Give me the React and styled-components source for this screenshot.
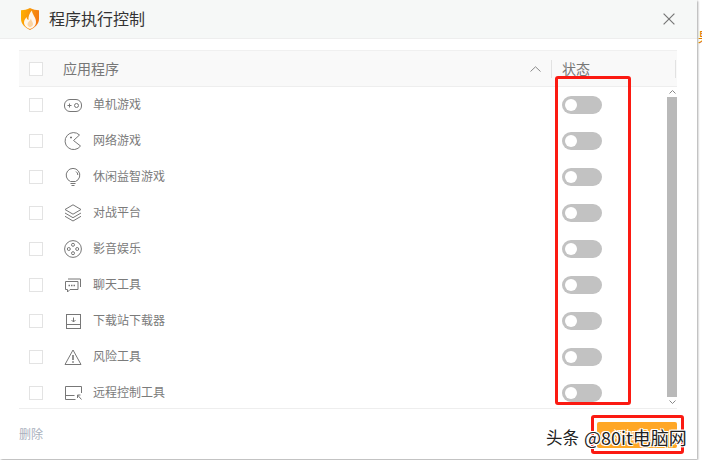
import React from "react";
import styled, {createGlobalStyle} from "styled-components";

const Global = createGlobalStyle`
  html, body {
    margin: 0;
    padding: 0;
    background: #fff;
  }
  * {
    box-sizing: border-box;
  }
`

const Page = styled.div`
  position: relative;
  width: 702px;
  height: 460px;
  overflow: hidden;
  background: #fff;
  font-family: "Noto Sans CJK SC", "Liberation Sans", sans-serif;
`

const Dialog = styled.div`
  display: flex;
  flex-direction: column;
  width: 697px;
  height: 459px;
  background: #fff;
  box-shadow: 1px 1px 2px rgba(0, 0, 0, 0.35);
`

const Header = styled.div`
  display: flex;
  align-items: center;
  flex: none;
  height: 39px;
  padding: 0 22px 0 21px;
  background: #f6f8f7;
  border-bottom: 1px solid #eeeeee;
`

const Title = styled.div`
  flex: 1;
  margin: 0 0 2px 10px;
  font-size: 16px;
  line-height: 22px;
  color: #333;
`

const Content = styled.div`
  display: flex;
  flex-direction: column;
  flex: 1;
  padding: 11px 20px 0 19px;
`

const TableHead = styled.div`
  display: flex;
  align-items: center;
  flex: none;
  height: 37px;
  padding-left: 10px;
  background: #f9f9f9;
  border-top: 1px solid #f0f0f0;
  border-bottom: 1px solid #eeeeee;
`

const Check = styled.div`
  flex: none;
  width: 14px;
  height: 14px;
  background: #fff;
  border: 1px solid #e3e3e3;
`

const HeadName = styled.div`
  width: 467px;
  margin: 0 0 2px 20px;
  font-size: 14px;
  color: #777;
`

const Divider = styled.div`
  flex: none;
  width: 1px;
  height: 18px;
  margin-left: ${p => p.$gap || 0}px;
  background: #e2e2e2;
`

const HeadState = styled.div`
  width: 113px;
  margin: 0 0 2px 10px;
  font-size: 14px;
  line-height: 18px;
  color: #777;
`

const Body = styled.div`
  display: flex;
  flex: none;
  height: 322px;
  border-bottom: 1px solid #eeeeee;
`

const List = styled.div`
  flex: 1;
`

const Row = styled.div`
  display: flex;
  align-items: center;
  height: 36px;
  padding-left: 10px;
`

const IconBox = styled.div`
  display: flex;
  align-items: center;
  justify-content: center;
  flex: none;
  width: 20px;
  height: 20px;
  margin-left: 20px;
`

const Name = styled.div`
  width: 469px;
  margin: 0 0 3px 10px;
  font-size: 12px;
  color: #7b7b7b;
`

const Toggle = styled.div`
  display: flex;
  align-items: center;
  width: 40px;
  height: 18px;
  padding-left: 3px;
  border-radius: 9px;
  background: #c2c2c2;
`

const Knob = styled.div`
  width: 12px;
  height: 12px;
  border-radius: 50%;
  background: #fff;
`

const Scrollbar = styled.div`
  display: flex;
  flex-direction: column;
  align-items: center;
  flex: none;
  width: 10px;
  height: 321px;
`

const ScrollArrow = styled.div`
  display: flex;
  align-items: center;
  justify-content: center;
  flex: none;
  height: 10px;
`

const ScrollThumb = styled.div`
  flex: none;
  width: 10px;
  height: 300px;
  background: #b9b9b9;
`

const Footer = styled.div`
  display: flex;
  align-items: center;
  justify-content: space-between;
  flex: none;
  height: 50px;
  padding-top: 1px;
`

const Delete = styled.div`
  margin-bottom: 2px;
  font-size: 12px;
  color: #a9b0bd;
`

const Primary = styled.div`
  display: flex;
  align-items: center;
  justify-content: center;
  width: 80px;
  height: 26px;
  border-radius: 2px;
  background: #ffa726;
  color: #fff;
  font-size: 12px;
`

const CloseBtn = styled.svg`
  flex: none;
  display: block;
  margin-bottom: 1px;
`

const Mark = styled.div`
  position: absolute;
  left: ${p => p.$x}px;
  top: ${p => p.$y}px;
  width: ${p => p.$w}px;
  height: ${p => p.$h}px;
  border: 3px solid #fb1a12;
  border-radius: 3px;
  pointer-events: none;
`

const Watermark = styled.div`
  position: absolute;
  left: 546px;
  top: 424px;
  display: flex;
  align-items: center;
  gap: 5px;
  height: 26px;
  white-space: nowrap;
  color: #222;
  text-shadow: 1px 1px 0 #fff, -1px -1px 0 #fff, 1px -1px 0 #fff, -1px 1px 0 #fff;
`

const MarkSource = styled.span`
  font-size: 16.5px;
`

const MarkName = styled.span`
  font-size: 18px;
`

const BehindText = styled.div`
  position: absolute;
  left: 698px;
  top: 28px;
  font-size: 14px;
  line-height: 16px;
  color: #e07b00;
`

const s = {fill: "none", stroke: "#777", strokeWidth: 1}

const icons = {
    game: (
        <svg width="18" height="13" viewBox="0 0 18 13" {...s}>
            <rect x=".5" y=".5" width="17" height="12" rx="5.5"/>
            <path d="M3.5 6.5h4M5.5 4.500v4"/>
            <circle cx="12.5" cy="6.5" r="2"/>
        </svg>
    ),
    pac: (
        <svg width="18" height="18" viewBox="0 0 18 18" {...s}>
            <path d="M15.500 3 9.500 8.500 16.500 14A8.500 8.500 0 1 1 15.500 3Z"/>
            <path d="M6 5.500h2M7 4.500v2"/>
        </svg>
    ),
    bulb: (
        <svg width="16" height="18" viewBox="0 0 16 18" {...s}>
            <path d="M5.5 13.5a6.8 6.8 0 1 1 5 0z"/>
            <path d="M11 3.5a4 4 0 0 1 1.8 3.5"/>
            <path d="M5.5 15.5h5M6.5 17.5h3"/>
        </svg>
    ),
    layers: (
        <svg width="18" height="18" viewBox="0 0 18 18" {...s}>
            <path d="M9 .8 17 5.5 9 10.2 1 5.5z"/>
            <path d="M1 9 9 13.7 17 9"/>
            <path d="M1 12.3 9 17 17 12.3"/>
        </svg>
    ),
    media: (
        <svg width="18" height="18" viewBox="0 0 18 18" {...s}>
            <circle cx="9" cy="9" r="8.4"/>
            <circle cx="9" cy="4.8" r="1.5"/>
            <circle cx="4.8" cy="9" r="1.5"/>
            <circle cx="13.2" cy="9" r="1.5"/>
            <circle cx="9" cy="13.2" r="1.5"/>
        </svg>
    ),
    chat: (
        <svg width="16" height="15" viewBox="0 0 16 15" {...s}>
            <path d="M.5 3.5h12.5v8H5L2.5 14v-2.5h-2z"/>
            <path d="M3 1h12.5v8"/>
            <path d="M3.500 7.500h1.500M6 7.500h1.500M8.500 7.500h1.500" strokeWidth="1.500"/>
        </svg>
    ),
    download: (
        <svg width="15" height="15" viewBox="0 0 15 15" {...s}>
            <rect x=".5" y=".5" width="14" height="14"/>
            <path d="M.5 10.500h14"/>
            <path d="M7.500 3.500v4.500M5.500 6l2 2 2-2"/>
        </svg>
    ),
    warn: (
        <svg width="18" height="16" viewBox="0 0 18 16" {...s}>
            <path d="M9 1 17 15.500H1z"/>
            <path d="M9 6v5M9 12.200v1.600" strokeWidth="1.600"/>
        </svg>
    ),
    remote: (
        <svg width="17" height="14" viewBox="0 0 17 14" {...s}>
            <path d="M16.500 7V.5H.5v13h10"/>
            <path d="M.5 9.500h9"/>
            <path d="M12.500 9h3M12.500 9v3M12.500 9l4 4.500"/>
        </svg>
    ),
}

const rows = [
    ["game", "单机游戏"],
    ["pac", "网络游戏"],
    ["bulb", "休闲益智游戏"],
    ["layers", "对战平台"],
    ["media", "影音娱乐"],
    ["chat", "聊天工具"],
    ["download", "下载站下载器"],
    ["warn", "风险工具"],
    ["remote", "远程控制工具"],
]

const Shield = () => (
    <svg width="18" height="22" viewBox="0 0 18 22">
        <defs>
            <linearGradient id="shieldFill" x1="0" y1="0" x2="1" y2="0.300">
                <stop offset="0" stopColor="#ffb400"/>
                <stop offset="1" stopColor="#f47a12"/>
            </linearGradient>
        </defs>
        <path d="M9 0C12 1.500 15 2.200 18 2.200V11C18 16 14 19.500 9 22C4 19.500 0 16 0 11V2.200C3 2.200 6 1.500 9 0Z"
              fill="url(#shieldFill)"/>
        <path d="M11 2.500C11 6.500 15 9 15 14C15 17.500 12.500 20 9 21C5.500 20 3 17.500 3 14.500C3 12 4.500 10.500 5.500 9C5.700 10.500 6.300 11.500 7.500 12C7 9 8.500 5 11 2.500Z"
              fill="#fff" fillOpacity="0.92"/>
        <path d="M10 10.500C10.300 13 12 14 12 16C12 17.700 10.700 18.800 9 19.300C7.500 18.700 6.500 17.500 6.500 16.200C6.500 14 9 13 10 10.500Z"
              fill="#f9c88a" fillOpacity="0.75"/>
    </svg>
)

export default function App() {
    return (
        <Page>
            <Global/>
            <BehindText>果</BehindText>
            <Dialog>
                <Header>
                    <Shield/>
                    <Title>程序执行控制</Title>
                    <CloseBtn width="12" height="12" viewBox="0 0 12 12" fill="none" stroke="#777" strokeWidth="1.200">
                        <path d="M.6.6l10.800 10.800M11.400.6.600 11.400"/>
                    </CloseBtn>
                </Header>
                <Content>
                    <TableHead>
                        <Check/>
                        <HeadName>应用程序</HeadName>
                        <svg width="11" height="6" viewBox="0 0 11 6" fill="none" stroke="#888" strokeWidth="1">
                            <path d="M.5 5.500 5.500.8l5 4.700"/>
                        </svg>
                        <Divider $gap={10}/>
                        <HeadState>状态</HeadState>
                        <Divider/>
                    </TableHead>
                    <Body>
                        <List>
                            {rows.map(([icon, name]) => (
                                <Row key={name}>
                                    <Check/>
                                    <IconBox>{icons[icon]}</IconBox>
                                    <Name>{name}</Name>
                                    <Toggle><Knob/></Toggle>
                                </Row>
                            ))}
                        </List>
                        <Scrollbar>
                            <ScrollArrow>
                                <svg width="7" height="4" viewBox="0 0 7 4" fill="none" stroke="#888">
                                    <path d="M.5 3.500l3-3 3 3"/>
                                </svg>
                            </ScrollArrow>
                            <ScrollThumb/>
                            <ScrollArrow>
                                <svg width="7" height="4" viewBox="0 0 7 4" fill="none" stroke="#888">
                                    <path d="M.5.500l3 3 3-3"/>
                                </svg>
                            </ScrollArrow>
                        </Scrollbar>
                    </Body>
                    <Footer>
                        <Delete>删除</Delete>
                        <Primary>添加程序</Primary>
                    </Footer>
                </Content>
            </Dialog>
            <Mark $x={555} $y={76} $w={76} $h={329}/>
            <Mark $x={591} $y={415} $w={93} $h={39}/>
            <Watermark>
                <MarkSource>头条</MarkSource>
                <MarkName>@80it电脑网</MarkName>
            </Watermark>
        </Page>
    )
}
